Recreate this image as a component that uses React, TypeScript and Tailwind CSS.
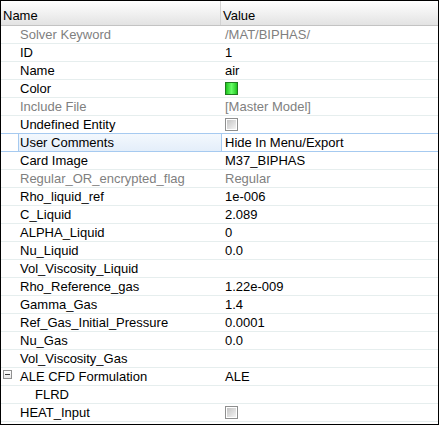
import React from "react";

type Row = {
  name: string;
  value?: string;
  gray?: boolean;
  kind?: "swatch" | "check";
  selected?: boolean;
  tree?: boolean;
  indent?: boolean;
};

const rows: Row[] = [
  { name: "Solver Keyword", value: "/MAT/BIPHAS/", gray: true },
  { name: "ID", value: "1" },
  { name: "Name", value: "air" },
  { name: "Color", kind: "swatch" },
  { name: "Include File", value: "[Master Model]", gray: true },
  { name: "Undefined Entity", kind: "check" },
  { name: "User Comments", value: "Hide In Menu/Export", selected: true },
  { name: "Card Image", value: "M37_BIPHAS" },
  { name: "Regular_OR_encrypted_flag", value: "Regular", gray: true },
  { name: "Rho_liquid_ref", value: "1e-006" },
  { name: "C_Liquid", value: "2.089" },
  { name: "ALPHA_Liquid", value: "0" },
  { name: "Nu_Liquid", value: "0.0" },
  { name: "Vol_Viscosity_Liquid", value: "" },
  { name: "Rho_Reference_gas", value: "1.22e-009" },
  { name: "Gamma_Gas", value: "1.4" },
  { name: "Ref_Gas_Initial_Pressure", value: "0.0001" },
  { name: "Nu_Gas", value: "0.0" },
  { name: "Vol_Viscosity_Gas", value: "" },
  { name: "ALE CFD Formulation", value: "ALE", tree: true },
  { name: "FLRD", value: "", indent: true },
  { name: "HEAT_Input", kind: "check" },
];

function Check() {
  return (
    <div className="w-[13px] h-[13px] border border-[#8e8f8f] bg-white p-[1px]">
      <div className="w-full h-full bg-gradient-to-br from-[#c4c4c4] to-[#f4f4f4]" />
    </div>
  );
}

function Swatch() {
  return (
    <div className="w-[13px] h-[13px] border border-[#1f7a1f] bg-gradient-to-r from-[#19c419] via-[#66ff66] to-[#19c419]" />
  );
}

export default function App() {
  return (
    <div
      className="w-[439px] h-[425px] border border-black bg-white text-[13px] leading-[17px] text-black"
      style={{ fontFamily: '"Liberation Sans", Arial, sans-serif' }}
    >
      <div className="flex h-[25px] border-b border-[#c3c3c3] bg-gradient-to-b from-[#ffffff] to-[#e3e3e3]">
        <div className="w-[220px] border-r border-[#d2d2d2] pl-[2px] pt-[6px]">Name</div>
        <div className="flex-1 pl-[2px] pt-[6px]">Value</div>
      </div>
      {rows.map((r, i) => {
        const nextSelected = rows[i + 1]?.selected;
        const borderColor = r.selected || nextSelected ? "border-[#a6caf0]" : "border-[#e6eeee]";
        return (
          <div key={i} className={`flex h-[18px] border-b ${borderColor}`}>
            <div className="w-[220px] flex">
              <div className="w-[17px] flex items-start">
                {r.tree && (
                  <div className="ml-[2px] mt-[2px] w-[9px] h-[9px] border border-[#919191] bg-gradient-to-b from-white to-[#e8e8e8] flex items-center justify-center">
                    <div className="w-[5px] h-[1px] bg-[#3c3c3c]" />
                  </div>
                )}
              </div>
              <div
                className={`flex-1 ${r.selected ? "border-l border-[#a6caf0] bg-gradient-to-b from-[#f3f8fd] to-[#e4eefa] pl-[1px]" : "pl-[2px]"} ${r.indent ? "pl-[17px]" : ""} ${r.gray ? "text-[#7f7f7f]" : ""} whitespace-nowrap`}
              >
                {r.name}
              </div>
            </div>
            <div
              className={`flex-1 flex items-center ${r.selected ? "border-l border-[#a6caf0] pl-[3px]" : "pl-[4px]"} ${r.gray ? "text-[#7f7f7f]" : ""} whitespace-nowrap`}
            >
              {r.kind === "swatch" ? <Swatch /> : r.kind === "check" ? <Check /> : r.value}
            </div>
          </div>
        );
      })}
    </div>
  );
}
